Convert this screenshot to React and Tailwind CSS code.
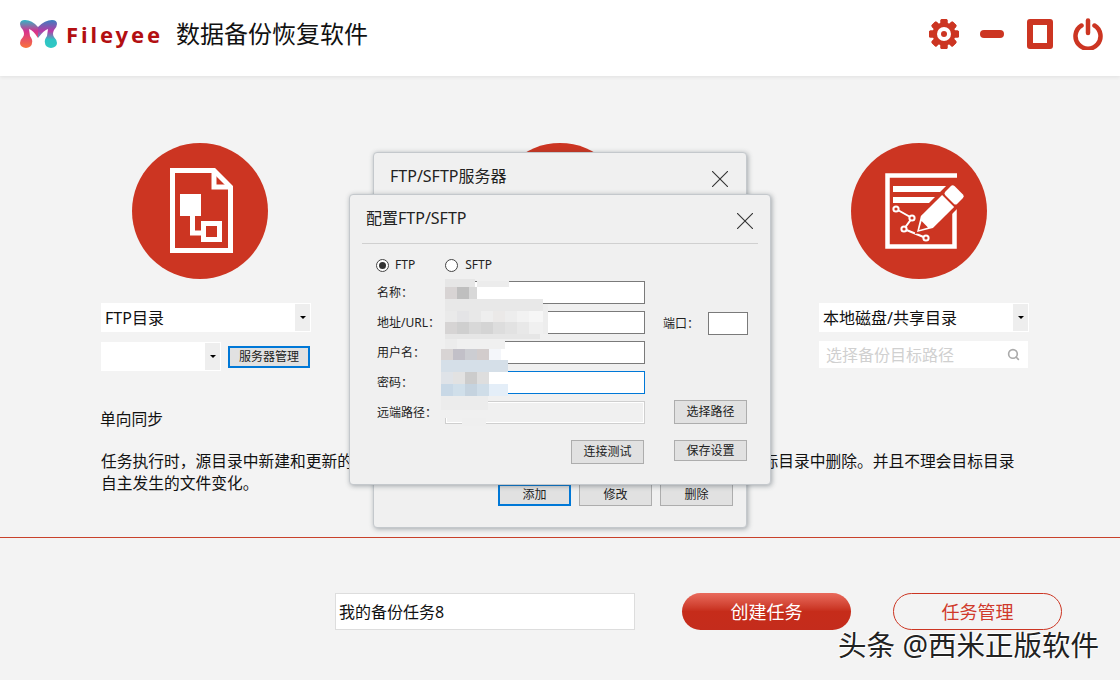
import { Search } from "lucide-react";

const font = { fontFamily: '"Noto Sans", "Noto Sans CJK SC", sans-serif' };

const mosaic = [
  // smooth smear behind the pixels
  [445, 279, 30, 8, "#e6e6e6"], [477, 281, 32, 6, "#ececec"], [477, 287, 12, 12, "#ffffff"],
  [445, 299, 98, 12, "#e8e8e8"], [543, 304, 5, 30, "#ededed"],
  // name row
  [445, 287, 12, 12, "#d8d4d4"], [457, 287, 12, 12, "#bfbfbf"], [469, 287, 8, 12, "#d8d8d8"],
  // address row
  [445, 311, 12, 11, "#eaeaea"], [457, 311, 12, 11, "#e4e4e6"], [469, 311, 12, 11, "#e8e8e8"], [481, 311, 12, 11, "#eeeeee"],
  [493, 311, 12, 11, "#ebe9e8"], [505, 311, 12, 11, "#ededed"], [517, 311, 12, 11, "#f2f2f2"], [529, 311, 14, 11, "#f6f6f6"],
  [445, 322, 12, 12, "#d6d4d4"], [457, 322, 12, 12, "#cfcfcf"], [469, 322, 12, 12, "#d8d8d8"], [481, 322, 12, 12, "#d4d4d4"],
  [493, 322, 12, 12, "#dddddd"], [505, 322, 12, 12, "#e2e2e2"], [517, 322, 12, 12, "#e8e8e8"], [529, 322, 14, 12, "#f0f0f0"],
  [445, 334, 95, 5, "#e6e6e6"], [445, 339, 60, 10, "#f0f0f0"], [445, 339, 12, 10, "#ececec"],
  // user row
  [441, 349, 12, 11, "#d8d4d4"], [453, 349, 12, 11, "#c2c0c8"], [465, 349, 12, 11, "#cccdd2"], [477, 349, 12, 11, "#d2cccc"], [489, 349, 12, 11, "#f4f6fa"],
  [441, 360, 67, 12, "#d5dfe8"],
  // password row
  [441, 372, 12, 12, "#dfe3e8"], [453, 372, 12, 12, "#e2e2e2"], [465, 372, 12, 12, "#cccccc"], [477, 372, 12, 12, "#dedede"],
  [441, 384, 12, 12, "#c8d8e6"], [453, 384, 12, 12, "#d0dfea"], [465, 384, 12, 12, "#c5d3df"], [477, 384, 12, 12, "#cfdde8"], [489, 384, 19, 12, "#e4eef8"],
  // path row
  [441, 396, 47, 14, "#ececec"], [445, 410, 43, 8, "#f0f0f0"], [462, 418, 24, 8, "#efefef"],
];

function Logo() {
  return (
    <svg width="37" height="28" viewBox="0 0 37 28">
      <defs>
        <linearGradient id="lg1" x1="0" y1="0" x2="0" y2="1">
          <stop offset="0" stopColor="#2fb6c4" />
          <stop offset="0.4" stopColor="#d8318e" />
          <stop offset="1" stopColor="#f9733a" />
        </linearGradient>
        <linearGradient id="lg2" x1="0" y1="0" x2="0" y2="1">
          <stop offset="0" stopColor="#3a7fc0" />
          <stop offset="0.4" stopColor="#b93aa6" />
          <stop offset="0.7" stopColor="#2fc4c4" />
          <stop offset="1" stopColor="#2fc9c4" />
        </linearGradient>
      </defs>
      <path d="M0 4 Q0 0 5 0 Q12 0 18 7 L18 18 Q13 10 9 9 L10 16 Q13 20 12 23 A6 5 0 0 1 0 23 Q0 20 3 17 Q5 14 3 10 Q0 7 0 4Z" fill="url(#lg1)" />
      <path d="M37 4 Q37 0 32 0 Q25 0 18 7 L18 18 Q24 10 28 9 L27 16 Q24 20 25 23 A6 5 0 0 0 37 23 Q37 20 34 17 Q32 14 34 10 Q37 7 37 4Z" fill="url(#lg2)" />
    </svg>
  );
}

function Gear() {
  return (
    <svg width="30" height="30" viewBox="0 0 30 30" fill="#cc3522">
      {[0, 45, 90, 135, 180, 225, 270, 315].map((a) => (
        <rect key={a} x="11.5" y="0" width="7" height="30" rx="1.5" transform={`rotate(${a} 15 15)`} />
      ))}
      <circle cx="15" cy="15" r="11.5" />
      <circle cx="15" cy="15" r="7" fill="#fff" />
      <circle cx="15" cy="15" r="3" />
    </svg>
  );
}

function Power() {
  return (
    <svg width="30" height="32" viewBox="0 0 30 32" fill="none" stroke="#cc3522" strokeWidth="4.5" strokeLinecap="round">
      <path d="M8.5 7.5 A12.5 12.5 0 1 0 21.5 7.5" />
      <path d="M15 2.5 V15" />
    </svg>
  );
}

function DocIcon() {
  return (
    <svg width="136" height="136" viewBox="0 0 136 136" fill="none" stroke="#fff" strokeWidth="5">
      <path d="M40.5 27.5 H82 L98.5 44 V107.5 H40.5 Z" />
      <path d="M82 27.5 V44 H98.5" />
      <rect x="48" y="51" width="21" height="22" fill="#fff" stroke="none" />
      <path d="M60.5 73 V90 H71" />
      <rect x="71.5" y="80.5" width="16" height="16" />
    </svg>
  );
}

function EditIcon() {
  return (
    <svg width="136" height="136" viewBox="0 0 136 136" fill="none">
      <path d="M106 32.5 H36.5 V103.5 H103.5 V66" stroke="#fff" strokeWidth="4.5" />
      <rect x="42" y="43" width="55" height="6" fill="#fff" />
      <rect x="42" y="54" width="45" height="6" fill="#fff" />
      <path d="M45 66 L61 75 L53 86 L75 95" stroke="#fff" strokeWidth="2" />
      {[[45, 66], [61, 75], [53, 86], [75, 95]].map(([x, y]) => (
        <circle key={x} cx={x} cy={y} r="2.6" fill="#cc3522" stroke="#fff" strokeWidth="2" />
      ))}
      <g transform="translate(66 89) rotate(-45)">
        <path d="M-3 0 L14 -12 H62 V12 H14 Z" fill="#cc3522" />
        <path d="M0 0 L14 -8.5 H44 V8.5 H14 Z" fill="#fff" />
        <path d="M3 0 L11 -4.5 L11 4.5 Z" fill="#cc3522" />
        <rect x="46" y="-8.5" width="13" height="17" rx="2.5" fill="#fff" />
      </g>
    </svg>
  );
}

function Dropdown({ width, text }) {
  return (
    <div className={`${width} h-[29px] bg-white flex items-center justify-between`}>
      <span className="pl-[4px] text-[16px] text-[#111]">{text}</span>
      <span className="w-[17px] h-[29px] bg-[#eeeeee] border border-white flex items-center justify-center">
        <span className="border-x-[3px] border-x-transparent border-t-[3px] border-t-black" />
      </span>
    </div>
  );
}

function CloseX() {
  return (
    <svg width="16" height="16" viewBox="0 0 16 16" stroke="#333" strokeWidth="1.1">
      <path d="M0 0 L16 16 M16 0 L0 16" />
    </svg>
  );
}

function DlgButton({ className, children }) {
  return (
    <button className={`w-[73px] bg-[#e1e1e1] text-[12px] text-[#222] flex items-center justify-center ${className}`}>
      {children}
    </button>
  );
}

function Field({ label, className }) {
  return (
    <>
      <span className="text-[12px] text-[#222]">{label}</span>
      <div className={`w-[200px] h-[23px] ${className}`} />
    </>
  );
}

export default function App() {
  return (
    <div className="relative w-[1120px] h-[680px] overflow-hidden bg-[#f3f3f3]" style={font}>
      <header className="h-[76px] pb-[8px] bg-white flex items-center shadow-[0_1px_4px_rgba(0,0,0,0.08)]">
        <div className="ml-[20px] w-[37px] flex"><Logo /></div>
        <span className="ml-[9px] text-[22px] font-bold tracking-[2.9px] text-[#b30f12]">Fileyee</span>
        <span className="ml-[13px] text-[24px] text-[#111]">数据备份恢复软件</span>
        <div className="ml-auto mr-[17px] flex items-center">
          <Gear />
          <span className="ml-[21px] w-[24px] h-[8px] rounded-full bg-[#cc3522]" />
          <span className="ml-[23px] w-[26px] h-[30px] rounded-[3px] border-[6px] border-[#cc3522]" />
          <span className="ml-[20px] flex"><Power /></span>
        </div>
      </header>

      <main className="h-[461px] pl-[101px] pt-[67px] text-[#111]">
        <div className="flex">
          <div className="w-[210px]">
            <div className="ml-[31px] w-[136px] h-[136px] rounded-full bg-[#cc3522]"><DocIcon /></div>
            <div className="mt-[24px]"><Dropdown width="w-[210px]" text="FTP目录" /></div>
            <div className="mt-[10px] flex items-center">
              <Dropdown width="w-[120px]" text="" />
              <button className="ml-[7px] w-[82px] h-[22px] pt-px bg-[#e1e1e1] border-2 border-[#0078d7] text-[12px] text-[#222] flex items-center justify-center">服务器管理</button>
            </div>
          </div>
          <div className="ml-[181px] w-[136px] h-[136px] rounded-full bg-[#cc3522]" />
          <div className="ml-[191px] w-[210px]">
            <div className="ml-[32px] w-[136px] h-[136px] rounded-full bg-[#cc3522]"><EditIcon /></div>
            <div className="mt-[24px]"><Dropdown width="w-[210px]" text="本地磁盘/共享目录" /></div>
            <div className="mt-[9px] w-[209px] h-[27px] bg-white flex items-center justify-between pl-[7px] pr-[8px]">
              <span className="text-[16px] text-[#d0d0d0]">选择备份目标路径</span>
              <Search size={13} strokeWidth={3} className="text-[#aaaaaa]" />
            </div>
          </div>
        </div>
        <p className="mt-[36px] -ml-[1px] text-[15.75px] leading-[24px]">单向同步</p>
        <p className="mt-[19px] text-[15.75px] leading-[22px] whitespace-nowrap">
          任务执行时，源目录中新建和更新的文件都会被同步到目标目录，源目录中删除的文件也会从目标目录中删除。并且不理会目标目录
          <br />
          自主发生的文件变化。
        </p>
      </main>

      <div className="h-px bg-[#c8412a]" />

      <footer className="pt-[55px] pl-[335px] flex items-start">
        <div className="w-[300px] h-[37px] bg-white border border-[#dddddd] flex items-center pl-[3px] text-[16px] text-[#111]">我的备份任务8</div>
        <button className="ml-[47px] w-[169px] h-[37px] pt-px rounded-full bg-gradient-to-b from-[#e96a5c] via-[#c62c1a] to-[#c42c1c] text-white text-[18px] flex items-center justify-center">创建任务</button>
        <button className="ml-[42px] w-[169px] h-[37px] pt-px rounded-full border border-[#cc3522] text-[#d0392b] text-[18px] flex items-center justify-center">任务管理</button>
      </footer>

      {/* watermark */}
      <span className="absolute left-[838px] top-[625px] text-[28.5px] leading-[40px] text-[#222] [text-shadow:1px_1px_0_#fff,-1px_-1px_0_#fff]">头条 @西米正版软件</span>

      {/* back dialog */}
      <div className="absolute left-[373px] top-[152px] w-[374px] h-[376px] rounded-[4px] bg-[#f0f0f0] border border-[#c4c8cc] shadow-[1px_1px_5px_rgba(60,70,80,0.45)]">
        <div className="flex items-start justify-between pl-[16px] pr-[18px] pt-[11px]">
          <span className="text-[16px] text-[#222]">FTP/SFTP服务器</span>
          <span className="mt-[7px] flex"><CloseX /></span>
        </div>
        <div className="absolute left-[124px] top-[331px] flex gap-[8px] h-[22px]">
          <DlgButton className="border-2 border-[#0078d7]">添加</DlgButton>
          <DlgButton className="border border-[#adadad]">修改</DlgButton>
          <DlgButton className="border border-[#adadad]">删除</DlgButton>
        </div>
      </div>

      {/* front dialog */}
      <div className="absolute left-[349px] top-[194px] w-[422px] h-[291px] rounded-[4px] bg-[#f0f0f0] border border-[#c4c8cc] shadow-[1px_1px_5px_rgba(60,70,80,0.45)] px-[12px]">
        <div className="h-[49px] border-b border-[#d0d0d0] flex items-start justify-between pl-[4px] pr-[5px] pt-[11px]">
          <span className="text-[16px] text-[#222]">配置FTP/SFTP</span>
          <span className="mt-[7px] flex"><CloseX /></span>
        </div>
        <div className="flex items-center mt-[14px] ml-[14px] h-[14px] text-[12px] text-[#222]">
          <span className="w-[13px] h-[13px] rounded-full border border-[#444] bg-white flex items-center justify-center">
            <span className="w-[7px] h-[7px] rounded-full bg-[#333]" />
          </span>
          <span className="ml-[6px]">FTP</span>
          <span className="ml-[30px] w-[13px] h-[13px] rounded-full border border-[#444] bg-white" />
          <span className="ml-[7px]">SFTP</span>
        </div>
        <div className="mt-[9px] ml-[15px] grid grid-cols-[68px_200px] gap-y-[7px] items-center">
          <Field label="名称：" className="bg-white border border-[#7a7a7a]" />
          <Field label="地址/URL：" className="bg-white border border-[#7a7a7a]" />
          <Field label="用户名：" className="bg-white border border-[#7a7a7a]" />
          <Field label="密码：" className="bg-white border border-[#0078d7]" />
          <Field label="远端路径：" className="bg-[#f0f0f0] border border-[#cfcfcf] shadow-[inset_0_0_0_1px_#fff]" />
        </div>
        {/* port field and the two right hand buttons sit on top of the form rows */}
        <div className="absolute left-[313px] top-[117px] flex items-center">
          <span className="text-[12px] text-[#222]">端口：</span>
          <span className="ml-[9px] w-[40px] h-[23px] bg-white border border-[#7a7a7a]" />
        </div>
        <DlgButton className="absolute left-[324px] top-[205px] h-[24px] border border-[#adadad]">选择路径</DlgButton>
        <DlgButton className="absolute left-[221px] top-[245px] h-[24px] border border-[#adadad]">连接测试</DlgButton>
        <DlgButton className="absolute left-[324px] top-[245px] h-[21px] border border-[#adadad]">保存设置</DlgButton>
      </div>

      {/* blurred-out credentials */}
      <svg className="absolute left-0 top-0 pointer-events-none" width="1120" height="680">
        {mosaic.map(([x, y, w, h, c], i) => (
          <rect key={i} x={x} y={y} width={w} height={h} fill={c} />
        ))}
      </svg>
    </div>
  );
}
